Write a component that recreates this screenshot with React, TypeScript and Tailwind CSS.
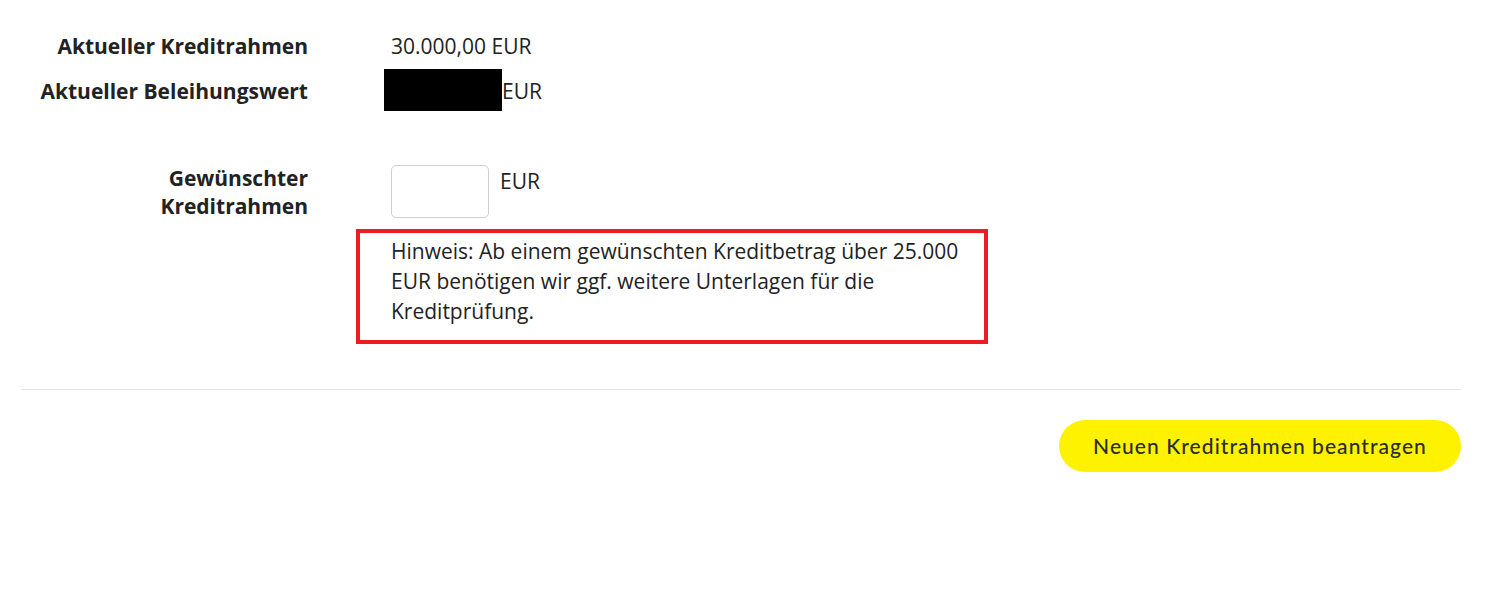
export default function App() {
   return (
      <div className="min-h-[598px] bg-white pl-[21px] pr-[40px] pt-[24px] text-[21px] text-[#222] [font-family:'Open_Sans',sans-serif]">
         <div className="grid grid-cols-[287px_1fr] gap-x-[83px]">
            <div className="flex h-[45px] items-center justify-end font-bold">Aktueller Kreditrahmen</div>
            <div className="flex h-[45px] items-center">30.000,00 EUR</div>

            <div className="flex h-[45px] items-center justify-end font-bold">Aktueller Beleihungswert</div>
            <div className="flex h-[45px] items-center">
               <span className="-ml-[7px] -mt-[4px] h-[42px] w-[118px] bg-black" />
               <span>EUR</span>
            </div>

            <div className="mt-[50px] text-right font-bold leading-[28px]">
               Gewünschter
               <br />
               Kreditrahmen
            </div>
            <div className="mt-[51px]">
               <div className="flex items-start gap-[11px]">
                  <input
                     type="text"
                     className="h-[53px] w-[98px] rounded-[5px] border border-[#cfcfcf] bg-white"
                  />
                  <span className="pt-[2px] leading-[28px]">EUR</span>
               </div>
               <div className="-ml-[35px] mt-[11px] w-[632px] border-[4px] border-[#ed1c24] pb-[14px] pl-[31px] pr-[8px] pt-[3px] leading-[30px]">
                  Hinweis: Ab einem gewünschten Kreditbetrag über 25.000 EUR benötigen wir ggf. weitere Unterlagen für die Kreditprüfung.
               </div>
            </div>
         </div>

         <hr className="mt-[45px] border-0 border-t border-[#e6e6e6]" />

         <div className="mt-[30px] flex justify-end">
            <button className="h-[52px] w-[402px] rounded-full bg-[#fff200] text-[21px] font-medium tracking-[0.05em] text-[#2b2b33] [font-family:Lato,sans-serif]">
               Neuen Kreditrahmen beantragen
            </button>
         </div>
      </div>
   );
}
